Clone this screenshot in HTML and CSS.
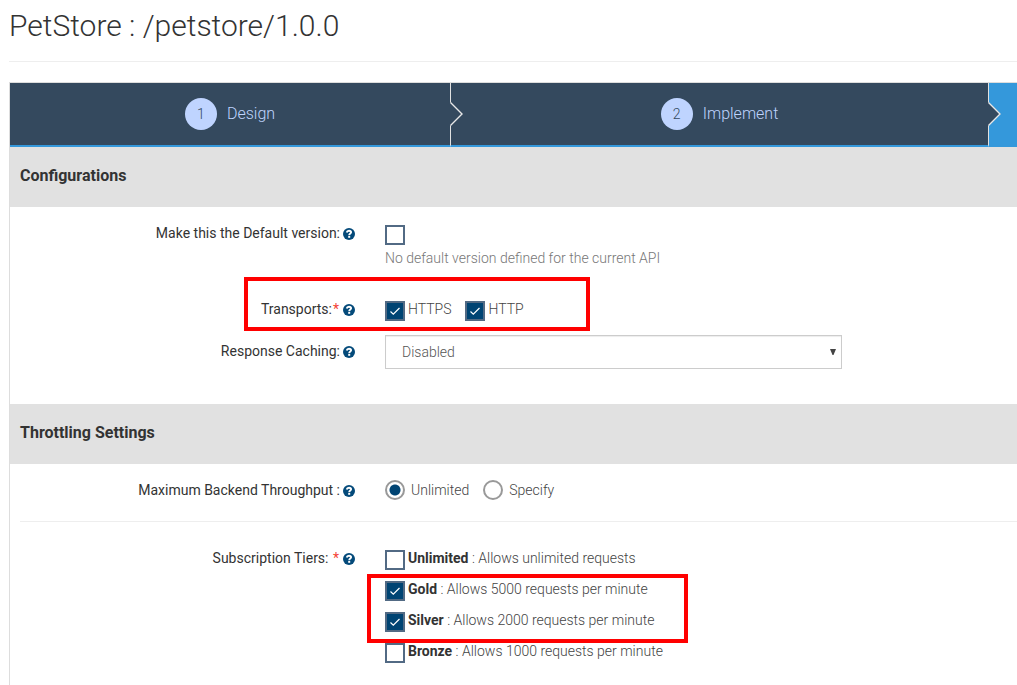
FILE: index.html
```html
<!DOCTYPE html>
<html lang="en">
<head>
<meta charset="utf-8">
<title>PetStore : /petstore/1.0.0</title>
<link rel="stylesheet" href="styles.css">
</head>
<body>
<svg class="sprite" aria-hidden="true">
  <symbol id="help" viewBox="0 0 12 12">
    <circle cx="6" cy="6" r="6" fill="#044a7a"/>
    <path d="M3.700 4.500C4 3.200 4.900 2.700 6 2.700C7.300 2.700 8.100 3.400 8.100 4.300C8.100 5.600 6.200 5.600 6.200 7.200" fill="none" stroke="#fff" stroke-width="1.900"/>
    <path d="M5.200 8h2v1.800h-2z" fill="#fff"/>
  </symbol>
</svg>
<main class="page">
  <h1 class="title">PetStore : /petstore/1.0.0</h1>
  <form class="panel">
    <ol class="steps">
      <li class="step"><span class="num">1</span><a class="step-link" href="#design">Design</a>
        <svg class="arrow" viewBox="0 0 14 26" aria-hidden="true"><path class="arrow-fill" d="M0 1L12.500 13L0 25z"/><path class="arrow-line" d="M.5 1.500L12 13L.5 24.500"/></svg></li>
      <li class="step"><span class="num">2</span><a class="step-link" href="#implement">Implement</a>
        <svg class="arrow" viewBox="0 0 14 26" aria-hidden="true"><path class="arrow-fill" d="M0 1L12.500 13L0 25z"/><path class="arrow-line" d="M.5 1.500L12 13L.5 24.500"/></svg></li>
      <li class="step current"></li>
    </ol>

    <h2 class="heading">Configurations</h2>
    <section class="section configurations">
      <div class="row">
        <label class="label" for="default-version">Make this the Default version:<svg class="help"><use href="#help"/></svg></label>
        <div class="field">
          <input class="check" type="checkbox" id="default-version">
          <p class="note">No default version defined for the current API</p>
        </div>
      </div>
      <div class="row transports">
        <div class="label" id="transports">Transports:<span class="required">*</span><svg class="help"><use href="#help"/></svg></div>
        <div class="field options" role="group" aria-labelledby="transports">
          <label class="option"><input class="check" type="checkbox" checked><span>HTTPS</span></label>
          <label class="option"><input class="check" type="checkbox" checked><span>HTTP</span></label>
        </div>
        <div class="mark mark-transports"></div>
      </div>
      <div class="row caching">
        <label class="label" for="caching">Response Caching:<svg class="help"><use href="#help"/></svg></label>
        <div class="field select-wrap">
          <select class="select" id="caching"><option>Disabled</option></select>
          <svg class="caret" viewBox="0 0 6 6" aria-hidden="true"><path d="M0 0H6L3.500 6h-1z"/></svg>
        </div>
      </div>
    </section>

    <h2 class="heading">Throttling Settings</h2>
    <section class="section">
      <div class="row">
        <div class="label" id="throughput">Maximum Backend Throughput :<svg class="help"><use href="#help"/></svg></div>
        <div class="field options" role="radiogroup" aria-labelledby="throughput">
          <label class="option radio-option"><input class="radio" type="radio" name="throughput" checked><span>Unlimited</span></label>
          <label class="option radio-option"><input class="radio" type="radio" name="throughput"><span>Specify</span></label>
        </div>
      </div>
      <hr class="rule">
      <div class="row">
        <div class="label" id="tiers">Subscription Tiers: <span class="required">*</span><svg class="help"><use href="#help"/></svg></div>
        <div class="field tiers" role="group" aria-labelledby="tiers">
          <label class="option"><input class="check" type="checkbox"><span><b>Unlimited</b> : Allows unlimited requests</span></label>
          <label class="option"><input class="check" type="checkbox" checked><span><b>Gold</b> : Allows 5000 requests per minute</span></label>
          <label class="option"><input class="check" type="checkbox" checked><span><b>Silver</b> : Allows 2000 requests per minute</span></label>
          <label class="option"><input class="check" type="checkbox"><span><b>Bronze</b> : Allows 1000 requests per minute</span></label>
          <div class="mark mark-tiers"></div>
        </div>
      </div>
    </section>
  </form>
</main>
</body>
</html>
```

FILE: styles.css
```css
* { box-sizing: border-box; }
body {
  margin: 0;
  background: #fff;
  color: #333;
  font: 300 14px/20px Roboto, sans-serif;
}
.sprite { position: absolute; width: 0; height: 0; }
.page {
  display: flex;
  flex-direction: column;
  min-height: 100vh;
  padding-left: 9px;
}
.title {
  margin: 0 0 20px;
  padding: 8px 0 17px;
  border-bottom: 1px solid #eee;
  font-size: 30px;
  font-weight: 300;
  line-height: 36px;
}
.panel { flex: 1; border: 1px solid #ddd; border-width: 1px 0 0 1px; }

/* Wizard steps */
.steps {
  display: grid;
  grid-template-columns: 441fr 538fr 28fr;
  margin: 0;
  padding: 0;
  list-style: none;
}
.step {
  position: relative;
  display: flex;
  align-items: center;
  justify-content: center;
  gap: 10px;
  height: 64px;
  border-right: 1px solid #e1e1e1;
  border-bottom: 2px solid #3498db;
  background: #34495e;
}
.step.current { border-right: 0; background: #3498db; }
.num {
  width: 32px;
  height: 32px;
  border-radius: 50%;
  background: #bfd4ff;
  color: #34495e;
  line-height: 32px;
  text-align: center;
}
.step-link { color: #bfd4ff; font-size: 16px; text-decoration: none; }
.arrow {
  position: absolute;
  z-index: 1;
  top: 18px;
  right: -14px;
  width: 14px;
  height: 26px;
}
.arrow-fill { fill: #34495e; }
.arrow-line { fill: none; stroke: #e8e8e8; stroke-width: 1.4; }

/* Sections */
.heading {
  margin: 0;
  padding: 19px 10px 21px;
  background: #e1e1e1;
  font-size: 16px;
  font-weight: 700;
  line-height: 20px;
}
.section { padding: 16px 0 20px 10px; }
.configurations { padding-bottom: 35px; }
.row {
  position: relative;
  display: grid;
  grid-template-columns: 335px 1fr;
  column-gap: 30px;
}
.transports { margin: 31px 0 14px; }
.label {
  display: flex;
  align-items: center;
  align-self: start;
  justify-content: flex-end;
  font-weight: 400;
  white-space: pre;
}
.help { width: 12px; height: 12px; margin: 2px 0 0 3px; }
.required { padding: 0 1px; color: #f44336; }
.caching .label { padding-top: 6px; }
.note { margin: 3px 0 0; color: #777; }
.rule { margin: 21px 0 26px; border: 0; border-top: 1px solid #eee; }

/* Controls */
.options { display: flex; gap: 14px; }
.option { display: flex; gap: 3px; color: #444; }
.radio-option { gap: 6px; }
.option b { color: #333; font-weight: 700; }
.check, .radio {
  display: block;
  flex: none;
  width: 20px;
  height: 20px;
  margin: 0;
  border: 2px solid #526a84;
  background: #fff;
  appearance: none;
}
.check { margin-top: 2px; }
.check:checked {
  background: #004473 url("data:image/svg+xml,%3Csvg xmlns='http://www.w3.org/2000/svg' viewBox='0 0 16 16'%3E%3Cpath d='M3.500 8.500l2.800 2.700L12.500 5' fill='none' stroke='white' stroke-width='1.200'/%3E%3C/svg%3E") center / 16px no-repeat;
}
.radio { border-color: #999; border-radius: 50%; }
.radio:checked { background: radial-gradient(circle, #004473 5px, #fff 6px); }
.select-wrap { position: relative; width: 100%; max-width: 457px; }
.select {
  display: block;
  width: 100%;
  height: 34px;
  padding: 0 16px;
  border: 1px solid #ccc;
  border-radius: 0;
  background: #fff;
  box-shadow: inset 0 1px 1px #00000013;
  color: #555;
  font: inherit;
  appearance: none;
}
.caret {
  position: absolute;
  top: 14px;
  right: 6px;
  width: 6px;
  height: 6px;
  fill: #444;
  pointer-events: none;
}
.tiers { position: relative; display: grid; gap: 9px; }

/* Highlight frames */
.mark { position: absolute; border: 4px solid #f00; pointer-events: none; }
.mark-transports { top: -22px; left: 224px; width: 346px; height: 54px; }
.mark-tiers { top: 26px; left: -18px; width: 321px; height: 69px; }
```
